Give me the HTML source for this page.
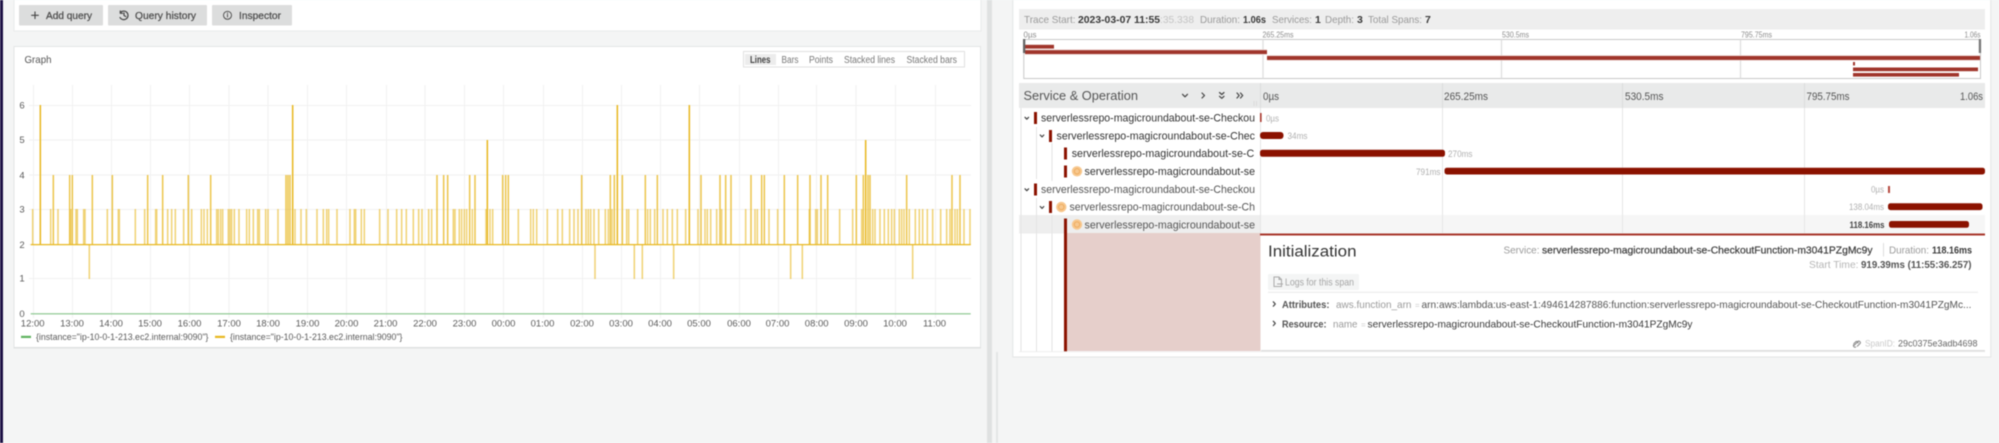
<!DOCTYPE html>
<html><head><meta charset="utf-8"><title>Explore</title>
<style>
html,body{margin:0;padding:0;background:#f4f5f5;width:1999px;height:443px;overflow:hidden}
svg{display:block;filter:blur(.5px)}
text{font-family:"Liberation Sans",sans-serif;white-space:pre}
.s{fill:#4d4d4d;font-size:10.5px;stroke:#4d4d4d;stroke-width:.25}
.g{fill:#9a9a9a;font-size:10.5px}
.d{fill:#3a3a3a;font-size:10.5px}
.b{fill:#3a3a3a;font-size:10.5px;font-weight:bold}
.t{fill:#5a5a5a;font-size:9.5px}
.r{fill:#333;font-size:11.3px}
.l{fill:#b0b0b0;font-size:9.5px}
.h{fill:#555;font-size:10.8px}
.m{fill:#8c8c8c;font-size:8px}
.v path{fill:none;stroke:#e8b71f;vector-effect:non-scaling-stroke;stroke-width:1.5}
.c{fill:none;stroke:#444;stroke-width:1.2;stroke-linecap:round;stroke-linejoin:round}
</style></head><body>
<svg width="1999" height="443" viewBox="0 0 1999 443" xmlns="http://www.w3.org/2000/svg">
<rect width="1999" height="443" fill="#f4f5f5"/>
<rect x="0" y="0" width="3" height="443" fill="#1c1044"/>

<!-- top panel -->
<rect x="14" y="-2" width="967" height="33" fill="#fff" stroke="#e9ebeb"/>
<rect x="19" y="5" width="84" height="20.500" rx="1" fill="#dcdddd"/>
<rect x="108" y="5" width="99" height="20.500" rx="1" fill="#dcdddd"/>
<rect x="212" y="5" width="80" height="20.500" rx="1" fill="#dcdddd"/>
<path d="M35 11.500V19M31.200 15.300H38.800" stroke="#444" stroke-width="1.100" fill="none"/>
<text x="46" y="19" class="s" textLength="46" lengthAdjust="spacingAndGlyphs">Add query</text>
<path d="M120.500 12.500A4.300 4.300 0 1 1 120 17.500M120.300 11V13.300H122.600M124 13V15.500L125.800 16.500" class="c" stroke-width="1"/>
<text x="135" y="19" class="s" textLength="61" lengthAdjust="spacingAndGlyphs">Query history</text>
<circle cx="227.500" cy="15.300" r="4" class="c" style="stroke-width:.9"/><path d="M227.500 14.500V17M227.500 13V13.400" class="c" style="stroke-width:.9"/>
<text x="239" y="19" class="s" textLength="42" lengthAdjust="spacingAndGlyphs">Inspector</text>

<!-- graph panel -->
<rect x="14" y="46.500" width="966.500" height="301.500" fill="#fff" stroke="#e3e5e5"/>
<rect x="14" y="347" width="967" height="1.500" fill="#dfe1e1"/>
<text x="24.500" y="63" fill="#555" font-size="10.500" textLength="27" lengthAdjust="spacingAndGlyphs">Graph</text>
<rect x="743.500" y="51.500" width="221" height="15.500" fill="#fff" stroke="#e0e1e1"/>
<rect x="745" y="54" width="31" height="11" fill="#ececec"/>
<text x="750" y="63" fill="#444" font-size="9.800" font-weight="bold" textLength="20.500" lengthAdjust="spacingAndGlyphs">Lines</text>
<text x="781.500" y="63" fill="#777" font-size="9.800" textLength="17" lengthAdjust="spacingAndGlyphs">Bars</text>
<text x="809" y="63" fill="#777" font-size="9.800" textLength="24" lengthAdjust="spacingAndGlyphs">Points</text>
<text x="844" y="63" fill="#777" font-size="9.800" textLength="51" lengthAdjust="spacingAndGlyphs">Stacked lines</text>
<text x="906.500" y="63" fill="#777" font-size="9.800" textLength="50.500" lengthAdjust="spacingAndGlyphs">Stacked bars</text>

<!-- grid -->
<path d="M33.500 85V318M72.500 85V318M111.500 85V318M150.500 85V318M189.500 85V318M229 85V318M268 85V318M307.500 85V318M346.500 85V318M386.500 85V318M425 85V318M464.500 85V318M503.500 85V318M543.500 85V318M582.500 85V318M621.500 85V318M660.500 85V318M699.500 85V318M739.500 85V318M778.500 85V318M816.500 85V318M856 85V318M895.500 85V318M935.500 85V318M29 105.500H971M29 140H971M29 175H971M29 209.500H971M29 244.500H971M29 278.500H971" stroke="#f1f1f1" stroke-width="1" fill="none"/>

<!-- y labels -->
<g class="t" text-anchor="middle">
<text x="22" y="108.500">6</text><text x="22" y="143">5</text><text x="22" y="178.500">4</text><text x="22" y="212.500">3</text><text x="22" y="248">2</text><text x="22" y="281.500">1</text><text x="22" y="317">0</text>
</g>
<!-- x labels -->
<g class="t" text-anchor="middle">
<text x="32.700" y="326.500">12:00</text><text x="72" y="326.500">13:00</text><text x="111" y="326.500">14:00</text><text x="150" y="326.500">15:00</text><text x="189.500" y="326.500">16:00</text><text x="229" y="326.500">17:00</text><text x="268" y="326.500">18:00</text><text x="307.500" y="326.500">19:00</text><text x="346.500" y="326.500">20:00</text><text x="385.500" y="326.500">21:00</text><text x="425" y="326.500">22:00</text><text x="464.500" y="326.500">23:00</text><text x="503.500" y="326.500">00:00</text><text x="542.500" y="326.500">01:00</text><text x="582" y="326.500">02:00</text><text x="621" y="326.500">03:00</text><text x="660" y="326.500">04:00</text><text x="699" y="326.500">05:00</text><text x="739" y="326.500">06:00</text><text x="777.500" y="326.500">07:00</text><text x="816.700" y="326.500">08:00</text><text x="856" y="326.500">09:00</text><text x="895" y="326.500">10:00</text><text x="934.500" y="326.500">11:00</text>
</g>

<!-- series -->
<path d="M30.700 313.800H970.700" stroke="#86c58a" stroke-width="1.200" fill="none"/>
<g class="v" transform="scale(.33333,1)">
<path opacity=".62" d="M98 245V209M152 245V209M174 245V209M212 245V209M228 245V209M232 245V209M251 245V209M255 245V209M322 245V209M355 245V209M358 245V209M406 245V209M434 245V209M467 245V209M470 245V209M503 245V209M515 245V209M526 245V209M551 245V209M575 245V209M604 245V209M612 245V209M622 245V209M650 245V209M655 245V209M662 245V209M668 245V209M685 245V209M690 245V209M695 245V209M703 245V209M717 245V209M740 245V209M748 245V209M760 245V209M773 245V209M778 245V209M797 245V209M804 245V209M834 245V209M885 245V209M903 245V209M919 245V209M951 245V209M970 245V209M980 245V209M986 245V209M1011 245V209M1050 245V209M1063 245V209M1067 245V209M1084 245V209M1093 245V209M1139 245V209M1164 245V209M1190 245V209M1205 245V209M1219 245V209M1240 245V209M1256 245V209M1266 245V209M1286 245V209M1295 245V209M1360 245V209M1365 245V209M1378 245V209M1385 245V209M1393 245V209M1400 245V209M1417 245V209M1458 245V209M1470 245V209M1478 245V209M268 245V279"/>
<path opacity=".8" d="M160 245V175M209 245V175M217 245V175M277 245V175M337 245V175M443 245V175M488 245V175M565 245V175M632 245V175M858 245V175M864 245V175M870 245V175M1311 245V175M1331 245V175M1343 245V175M1409 245V175M1425 245V175"/>
<path opacity="1" d="M121 245V105M878 245V105M1462 245V140"/>
</g>
<g class="v" transform="translate(500,0) scale(.33333,1)">
<path opacity=".62" d="M55 245V209M92 245V209M100 245V209M110 245V209M142 245V209M173 245V209M187 245V209M209 245V209M222 245V209M234 245V209M258 245V209M265 245V209M272 245V209M282 245V209M296 245V209M316 245V209M325 245V209M336 245V209M380 245V209M386 245V209M413 245V209M443 245V209M451 245V209M464 245V209M489 245V209M502 245V209M517 245V209M532 245V209M557 245V209M594 245V209M615 245V209M622 245V209M632 245V209M650 245V209M665 245V209M737 245V209M765 245V209M772 245V209M807 245V209M833 245V209M928 245V209M947 245V209M952 245V209M975 245V209M1019 245V209M1058 245V209M1085 245V209M1118 245V209M1125 245V209M1140 245V209M1153 245V209M1165 245V209M1175 245V209M1183 245V209M1198 245V209M1205 245V209M1212 245V209M1228 245V209M1246 245V209M1258 245V209M1268 245V209M1282 245V209M1298 245V209M1322 245V209M1340 245V209M1350 245V209M1365 245V209M1372 245V209M1392 245V209M1410 245V209M285 245V279M403 245V279M427 245V279M521 245V279M872 245V279M907 245V279M1238 245V279"/>
<path opacity=".8" d="M8 245V175M17 245V175M25 245V175M245 245V175M331 245V175M343 245V175M367 245V175M436 245V175M472 245V175M603 245V175M660 245V175M677 245V175M693 245V175M753 245V175M785 245V175M793 245V175M853 245V175M893 245V175M930 245V175M963 245V175M983 245V175M1069 245V175M1090 245V175M1104 245V175M1110 245V175M1220 245V175M1356 245V175M1380 245V175"/>
<path opacity="1" d="M352 245V105M568 245V105M1097 245V140"/>
</g>
<path d="M30.700 244.600H970.700" stroke="#e8b71f" stroke-width="1.300" fill="none"/>

<!-- legend -->
<rect x="21" y="335.800" width="10" height="2.200" fill="#5fb35f"/>
<text x="36" y="340" class="t" textLength="172.500" lengthAdjust="spacingAndGlyphs">{instance="ip-10-0-1-213.ec2.internal:9090"}</text>
<rect x="215" y="335.800" width="10" height="2.200" fill="#e8b71f"/>
<text x="230" y="340" class="t" textLength="172.500" lengthAdjust="spacingAndGlyphs">{instance="ip-10-0-1-213.ec2.internal:9090"}</text>

<!-- splitter -->
<rect x="987" y="0" width="5" height="443" fill="#dfe1e1"/>
<rect x="996" y="352" width="2" height="91" fill="#e4e6e6"/>

<!-- right panel -->
<rect x="1012.800" y="-2" width="978" height="359" fill="#fff" stroke="#e3e5e5"/>

<!-- trace header -->
<rect x="1019" y="9" width="966" height="20.500" fill="#eeeeee"/>
<text x="1024" y="23" class="g" textLength="51.500" lengthAdjust="spacingAndGlyphs">Trace Start:</text>
<text x="1078" y="23" class="b" textLength="82" lengthAdjust="spacingAndGlyphs">2023-03-07 11:55</text>
<text x="1160" y="23" fill="#c4c4c4" font-size="10.500" textLength="34" lengthAdjust="spacingAndGlyphs">:35.338</text>
<text x="1200" y="23" class="g" textLength="40" lengthAdjust="spacingAndGlyphs">Duration:</text>
<text x="1243" y="23" class="b" textLength="23" lengthAdjust="spacingAndGlyphs">1.06s</text>
<text x="1272" y="23" class="g" textLength="40" lengthAdjust="spacingAndGlyphs">Services:</text>
<text x="1315" y="23" class="b">1</text>
<text x="1325" y="23" class="g" textLength="29" lengthAdjust="spacingAndGlyphs">Depth:</text>
<text x="1357" y="23" class="b">3</text>
<text x="1368" y="23" class="g" textLength="54" lengthAdjust="spacingAndGlyphs">Total Spans:</text>
<text x="1425" y="23" class="b">7</text>

<!-- minimap -->
<text x="1023.500" y="37.500" class="m">0µs</text>
<text x="1262.500" y="37.500" class="m" textLength="31" lengthAdjust="spacingAndGlyphs">265.25ms</text>
<text x="1502" y="37.500" class="m" textLength="27" lengthAdjust="spacingAndGlyphs">530.5ms</text>
<text x="1741" y="37.500" class="m" textLength="31" lengthAdjust="spacingAndGlyphs">795.75ms</text>
<text x="1964.500" y="37.500" class="m" textLength="16" lengthAdjust="spacingAndGlyphs">1.06s</text>
<rect x="1023.800" y="39.500" width="956.700" height="39" fill="#fff" stroke="#c9c9c9"/>
<path d="M1263 39.500V78.500M1501.500 39.500V78.500M1740.500 39.500V78.500" stroke="#ddd" stroke-width="1.200"/>
<g fill="#eed9d6">
<rect x="1025" y="49.400" width="242" height="5.400"/><rect x="1267" y="55.200" width="713" height="5.400"/>
</g>
<g fill="#a0352b">
<rect x="1025" y="44.800" width="29" height="3.800"/>
<rect x="1025" y="50.200" width="242" height="3.800"/>
<rect x="1267" y="56" width="713" height="3.900"/>
<rect x="1853" y="62" width="2" height="3.500"/>
<rect x="1853" y="67.500" width="125" height="3.700"/>
<rect x="1853" y="73" width="106" height="3.600"/>
</g>
<rect x="1023" y="39" width="2.300" height="14" fill="#666"/>
<rect x="1978.800" y="39" width="2.300" height="14" fill="#777"/>

<!-- timeline header -->
<rect x="1019" y="83" width="966" height="25" fill="#e9eaea"/>
<text x="1023.500" y="100" fill="#555" font-size="13.300" textLength="114.500" lengthAdjust="spacingAndGlyphs">Service &amp; Operation</text>
<path class="c" d="M1182.500 94.300L1185 96.800L1187.500 94.300M1202 93L1204.500 95.500L1202 98M1219.500 92.500L1221.800 94.500L1224 92.500M1219.500 96.300L1221.800 98.300L1224 96.300M1237 93L1239.200 95.500L1237 98M1240.500 93L1242.700 95.500L1240.500 98"/>
<path d="M1254 101V106M1256.500 101V106" stroke="#d8d8d8" stroke-width=".8"/>
<path d="M1260.500 83V108M1442.500 83V108M1622.500 83V108M1804.500 83V108" stroke="#dcdcdc"/>
<text x="1263" y="100" class="h" textLength="16" lengthAdjust="spacingAndGlyphs">0µs</text>
<text x="1444" y="100" class="h" textLength="44" lengthAdjust="spacingAndGlyphs">265.25ms</text>
<text x="1625" y="100" class="h" textLength="38.500" lengthAdjust="spacingAndGlyphs">530.5ms</text>
<text x="1806.500" y="100" class="h" textLength="43" lengthAdjust="spacingAndGlyphs">795.75ms</text>
<text x="1960" y="100" class="h" textLength="23" lengthAdjust="spacingAndGlyphs">1.06s</text>

<!-- row 7 background -->
<rect x="1019" y="215" width="241.500" height="18.500" fill="#eeeeee"/>
<rect x="1260.500" y="215" width="724.500" height="18.500" fill="#f6f6f6"/>

<!-- gridlines in body -->
<path d="M1442.500 108V233M1622.500 108V233M1804.500 108V233M1260.500 108V233" stroke="#e6e6e6"/>
<!-- indent guides -->
<path d="M1021 108V352M1036.500 127V179M1036.500 198V352M1052 143V181M1052 215V352" stroke="#e4e4e4" fill="none"/>

<!-- chevrons -->
<path class="c" d="M1025 117.300L1026.800 119.200L1028.600 117.300M1040.300 135L1042 136.900L1043.800 135M1025 188.800L1026.800 190.700L1028.600 188.800M1040.300 206.500L1042 208.400L1043.800 206.500"/>

<!-- service bars -->
<g fill="#8b1200">
<rect x="1034" y="112" width="3" height="12"/>
<rect x="1049" y="130" width="3" height="12"/>
<rect x="1064" y="147.500" width="3" height="12"/>
<rect x="1064" y="165.500" width="3" height="12"/>
<rect x="1034" y="183.500" width="3" height="12"/>
<rect x="1049" y="201" width="3" height="12"/>
<rect x="1064" y="218.500" width="3" height="133"/>
</g>

<!-- error icons -->
<g>
<circle cx="1077" cy="171.300" r="5.200" fill="#f7c88f"/><circle cx="1077" cy="171.300" r="2.700" fill="none" stroke="#eeaa5c" stroke-width=".9"/>
<circle cx="1061.300" cy="207" r="5.200" fill="#f7c88f"/><circle cx="1061.300" cy="207" r="2.700" fill="none" stroke="#eeaa5c" stroke-width=".9"/>
<circle cx="1077" cy="224.500" r="5.200" fill="#f7c88f"/><circle cx="1077" cy="224.500" r="2.700" fill="none" stroke="#eeaa5c" stroke-width=".9"/>
</g>

<!-- operation names -->
<text x="1041" y="121.500" class="r" textLength="214" lengthAdjust="spacingAndGlyphs">serverlessrepo-magicroundabout-se-Checkou</text>
<text x="1056.500" y="139.300" class="r" textLength="198.500" lengthAdjust="spacingAndGlyphs">serverlessrepo-magicroundabout-se-Chec</text>
<text x="1071.700" y="157" class="r" textLength="182.500" lengthAdjust="spacingAndGlyphs">serverlessrepo-magicroundabout-se-C</text>
<text x="1084.500" y="175" class="r" textLength="170.500" lengthAdjust="spacingAndGlyphs">serverlessrepo-magicroundabout-se</text>
<text x="1041" y="193" class="r" style="fill:#555" textLength="214" lengthAdjust="spacingAndGlyphs">serverlessrepo-magicroundabout-se-Checkou</text>
<text x="1069.500" y="210.500" class="r" style="fill:#555" textLength="185.500" lengthAdjust="spacingAndGlyphs">serverlessrepo-magicroundabout-se-Ch</text>
<text x="1084.500" y="228.500" class="r" style="fill:#555" textLength="170.500" lengthAdjust="spacingAndGlyphs">serverlessrepo-magicroundabout-se</text>

<!-- span bars -->
<g fill="#8b1200">
<rect x="1260" y="113" width="1.600" height="9" fill="#a8352a"/>
<rect x="1260" y="132" width="23.500" height="7" rx="3"/>
<rect x="1260" y="149.800" width="185" height="7" rx="2.500"/>
<rect x="1444.500" y="167.700" width="540.500" height="6.800" rx="2.500"/>
<rect x="1888" y="186" width="2" height="7" fill="#b5483d"/>
<rect x="1888" y="203.300" width="94.500" height="6.800" rx="2.500"/>
<rect x="1889" y="221" width="80" height="6.800" rx="2.500"/>
</g>
<text x="1266" y="121.500" class="l" textLength="13" lengthAdjust="spacingAndGlyphs">0µs</text>
<text x="1287.500" y="139" class="l" textLength="20" lengthAdjust="spacingAndGlyphs">34ms</text>
<text x="1448" y="157" class="l" textLength="24.500" lengthAdjust="spacingAndGlyphs">270ms</text>
<text x="1416" y="174.800" class="l" textLength="24.500" lengthAdjust="spacingAndGlyphs">791ms</text>
<text x="1871" y="192.500" class="l" textLength="13" lengthAdjust="spacingAndGlyphs">0µs</text>
<text x="1849" y="210" class="l" textLength="35" lengthAdjust="spacingAndGlyphs">138.04ms</text>
<text x="1849.500" y="228" fill="#444" font-size="9.500" font-weight="bold" textLength="35" lengthAdjust="spacingAndGlyphs">118.16ms</text>

<!-- detail -->
<rect x="1067" y="233" width="193.500" height="118" fill="#e6cfcb"/>
<rect x="1260.500" y="235" width="724.500" height="116" fill="#fff"/>
<rect x="1260" y="233.500" width="725" height="2" fill="#a8352a"/>
<rect x="1261" y="350" width="724" height="1.500" fill="#dedede"/>
<rect x="1019" y="351.300" width="966" height=".8" fill="#ececec"/>

<text x="1268" y="256.500" fill="#333" font-size="15.500" textLength="88.500" lengthAdjust="spacingAndGlyphs">Initialization</text>
<text x="1503.500" y="253.500" class="g" textLength="36" lengthAdjust="spacingAndGlyphs">Service:</text>
<text x="1542" y="253.500" class="d" textLength="330.500" lengthAdjust="spacingAndGlyphs" style="stroke:#3a3a3a;stroke-width:.2">serverlessrepo-magicroundabout-se-CheckoutFunction-m3041PZgMc9y</text>
<path d="M1883.500 243V256.500" stroke="#ddd"/>
<text x="1889" y="253.500" class="g" textLength="40" lengthAdjust="spacingAndGlyphs">Duration:</text>
<text x="1932" y="253.500" class="b" textLength="40" lengthAdjust="spacingAndGlyphs">118.16ms</text>
<text x="1809" y="268" class="g" style="fill:#b5b5b5" textLength="49.500" lengthAdjust="spacingAndGlyphs">Start Time:</text>
<text x="1861" y="268" class="b" style="fill:#555" textLength="110.500" lengthAdjust="spacingAndGlyphs">919.39ms (11:55:36.257)</text>

<rect x="1268" y="274" width="91" height="16" rx="1" fill="#f4f5f5"/>
<path d="M1274 277H1279L1281.500 279.500V286.500H1274ZM1279 277V279.500H1281.500M1277 284H1283" fill="none" stroke="#aaa" stroke-width="1"/>
<text x="1285" y="285.500" fill="#a5a5a5" font-size="10.300" textLength="69" lengthAdjust="spacingAndGlyphs">Logs for this span</text>
<rect x="1268" y="291.800" width="710" height="1" fill="#e8e8e8"/>

<path class="c" d="M1273.300 301.800L1275.300 304L1273.300 306.200M1273.300 321.200L1275.300 323.400L1273.300 325.600"/>
<text x="1282" y="308" class="b" style="fill:#555" textLength="47.500" lengthAdjust="spacingAndGlyphs">Attributes:</text>
<text x="1336" y="308" class="g" textLength="75.500" lengthAdjust="spacingAndGlyphs">aws.function_arn</text>
<text x="1415" y="308" fill="#ccc" font-size="8">=</text>
<text x="1421.500" y="308" class="d" style="fill:#555" textLength="550" lengthAdjust="spacingAndGlyphs">arn:aws:lambda:us-east-1:494614287886:function:serverlessrepo-magicroundabout-se-CheckoutFunction-m3041PZgMc...</text>
<text x="1282" y="327.300" class="b" style="fill:#555" textLength="44.500" lengthAdjust="spacingAndGlyphs">Resource:</text>
<text x="1333" y="327.300" class="g" textLength="24.500" lengthAdjust="spacingAndGlyphs">name</text>
<text x="1361" y="327.300" fill="#ccc" font-size="8">=</text>
<text x="1367.500" y="327.300" class="d" textLength="325" lengthAdjust="spacingAndGlyphs">serverlessrepo-magicroundabout-se-CheckoutFunction-m3041PZgMc9y</text>

<path d="M1854 345.500L1857.500 342M1853.500 344L1856 341.500A1.500 1.500 0 0 1 1858 343.500M1857 346.500L1859.800 343.800A1.500 1.500 0 0 0 1857.800 341.500M1854 344.500A1.500 1.500 0 0 0 1856 346.800" fill="none" stroke="#888" stroke-width="1"/>
<text x="1865" y="346.500" fill="#c9c9c9" font-size="9" textLength="30" lengthAdjust="spacingAndGlyphs">SpanID:</text>
<text x="1898" y="346.500" fill="#666" font-size="9" textLength="79.500" lengthAdjust="spacingAndGlyphs">29c0375e3adb4698</text>
</svg>
</body></html>
